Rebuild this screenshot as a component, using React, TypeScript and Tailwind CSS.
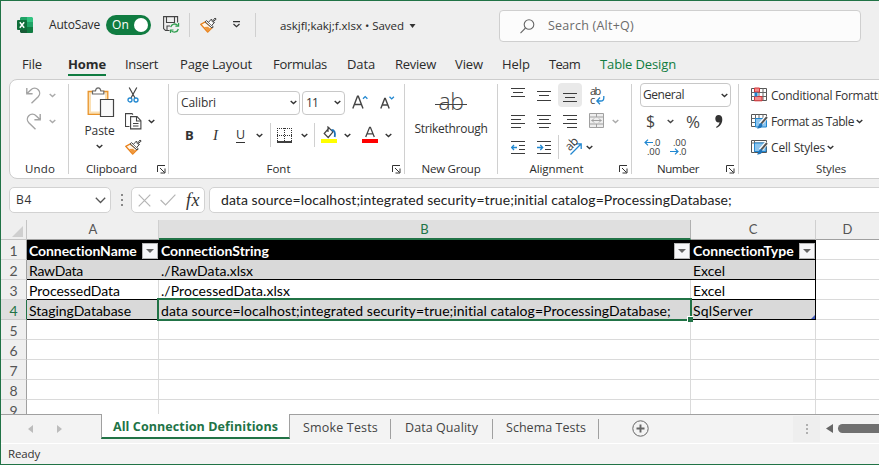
import React, { useLayoutEffect, useRef } from "react";

const UI = "font-['Open_Sans','Noto_Sans',sans-serif]";
const CELL = "font-['Lato',sans-serif]";

/* Text run whose tracking is adjusted so that it takes up `w` pixels. */
function T({ w, className = "", children }: { w: number; className?: string; children: string }) {
  const ref = useRef<HTMLSpanElement>(null);
  useLayoutEffect(() => {
    const el = ref.current;
    if (!el) return;
    el.style.letterSpacing = "0px";
    const natural = el.getBoundingClientRect().width;
    el.style.letterSpacing = `${(w - natural) / children.length}px`;
  }, [w, children]);
  return (
    <span ref={ref} className={`inline-block shrink-0 whitespace-pre leading-none ${className}`}>
      {children}
    </span>
  );
}

type P = { className?: string };

const Chevron = ({ className = "" }: P) => (
  <svg viewBox="0 0 7 5" className={`h-[5px] w-[7px] shrink-0 ${className}`} fill="none" stroke="currentColor" strokeWidth="1.4">
    <path d="M.7 1l2.8 2.600L6.300 1" />
  </svg>
);

const Launcher = ({ className = "" }: P) => (
  <svg viewBox="0 0 9 9" className={`h-[9px] w-[9px] shrink-0 ${className}`} fill="none" stroke="#333" strokeWidth="1">
    <path d="M.5 7V.5H8M3 3l4.5 4.5M8 3.5V8H3.5" />
  </svg>
);

const ExcelLogo = ({ className = "" }: P) => (
  <svg viewBox="0 0 16 16" className={`h-4 w-4 shrink-0 ${className}`}>
    <path d="M4 0h6v5H3V1z" fill="#21a366" />
    <path d="M10 0h5l1 1v4h-6z" fill="#33c481" />
    <path d="M3 5h7v5H3z" fill="#107c41" />
    <path d="M10 5h6v5h-6z" fill="#21a366" />
    <path d="M3 10h13v5l-1 1H4l-1-1z" fill="#185c37" />
    <path d="M10 10h6v5l-1 1h-5z" fill="#107c41" />
    <rect y="3" width="10" height="10" rx="1" fill="#0f6e3a" />
    <path d="M2.8 5.2l4.4 5.6M7.2 5.2l-4.4 5.6" stroke="#fff" strokeWidth="1.5" />
  </svg>
);

const SaveSync = ({ className = "" }: P) => (
  <svg viewBox="0 0 17 17" className={`h-[17px] w-[17px] shrink-0 ${className}`} fill="none">
    <path d="M6.5 14.5H2.5L.6 12.6V.6h14v6M3.5.6v5.9h8V.6M4 14.5V10h3" stroke="#444" strokeWidth="1.1" />
    <path d="M7.7 11.2a4 4 0 0 1 7-1.7M15.3 13a4 4 0 0 1-7 1.6" stroke="#2f9e4f" strokeWidth="1.3" />
    <path d="M15.6 7v3.2h-3.2M7.5 17v-3h3" stroke="#2f9e4f" strokeWidth="1.2" />
  </svg>
);

const Brush = ({ className = "" }: P) => (
  <svg viewBox="0 0 17 16" className={`h-4 w-[17px] shrink-0 ${className}`} fill="none" strokeLinejoin="round">
    <path d="M5 5L.8 7.400l6.900 7.600 4.500-4.500z" fill="#fff6ea" stroke="#e8811a" strokeWidth="1.4" />
    <path d="M4 10l4-.2 2.600 2.200-2.900 2.800z" fill="#f0983c" />
    <path d="M6.500 3.600l6.800 6.300-1.300 1.100-6.900-6.200z" fill="#fff" stroke="#444" />
    <path d="M8.500 5.300l3-3.300.8 2.500L15 1l1.200 1.100-3.400 2.800 1.700.5-2.700 2.900" fill="#fff" stroke="#444" />
  </svg>
);

const Undo = ({ className = "" }: P) => (
  <svg viewBox="0 0 15 17" className={`h-[17px] w-[15px] shrink-0 ${className}`} fill="none" stroke="#a3a3a3" strokeWidth="1.4">
    <path d="M.8 1v5.7h5.8M1 6.5l4-3.8a5 5 0 0 1 7.2 0 5 5 0 0 1 0 7L5.5 16.2" />
  </svg>
);

const Paste = ({ className = "" }: P) => (
  <svg viewBox="0 0 28 31" className={`h-[31px] w-7 shrink-0 ${className}`} fill="none">
    <path d="M1.2 4.5h19.600v22.800H1.200z" fill="#fbe0b4" stroke="#e8932a" strokeWidth="1.300" />
    <path d="M4 6.500h14v18H4z" fill="#fff" />
    <path d="M5.500 7V4h3c.3-4.300 5-4.300 5.300 0h3v3z" fill="#fff" stroke="#6a6a6a" strokeWidth="1.200" />
    <path d="M13.500 12.500h13v17h-13z" fill="#fafafa" stroke="#444" strokeWidth="1.200" />
  </svg>
);

const Cut = ({ className = "" }: P) => (
  <svg viewBox="0 0 12 16" className={`h-4 w-3 shrink-0 ${className}`} fill="none">
    <path d="M2.200.5l5.800 10.500M9.800.5L4 11" stroke="#444" strokeWidth="1.200" />
    <circle cx="3" cy="13" r="2" stroke="#2187d0" strokeWidth="1.300" />
    <circle cx="9" cy="13" r="2" stroke="#2187d0" strokeWidth="1.300" />
  </svg>
);

const Copy = ({ className = "" }: P) => (
  <svg viewBox="0 0 17 17" className={`h-[17px] w-[17px] shrink-0 ${className}`} fill="none" stroke="#444" strokeWidth="1.100">
    <path d="M4.500 13.500h-4V.6H7l1 1" />
    <path d="M5.600 3.600h6.400l3.900 4v8.300H5.600z" fill="#fff" />
    <path d="M11.500 3.600V8h4.400M8 10.500h5.500M8 13h5.500" />
  </svg>
);

const GrowA = ({ className = "" }: P) => (
  <svg viewBox="0 0 16 15" className={`h-[15px] w-4 shrink-0 ${className}`} fill="none">
    <path d="M.8 13.500L5.500 1.200h.8L11 13.500M2.500 9.500h6.800" stroke="#444" strokeWidth="1.400" />
    <path d="M11 3.800l2.200-2.200 2.200 2.200" stroke="#2187d0" strokeWidth="1.300" />
  </svg>
);
const ShrinkA = ({ className = "" }: P) => (
  <svg viewBox="0 0 15 15" className={`h-[15px] w-[15px] shrink-0 ${className}`} fill="none">
    <path d="M.8 13.500L4.700 3.500h.6L9.200 13.500M2.300 10h5.500" stroke="#444" strokeWidth="1.400" />
    <path d="M9.500 1.700l2.200 2.200 2.200-2.200" stroke="#2187d0" strokeWidth="1.300" />
  </svg>
);

const Borders = ({ className = "" }: P) => (
  <svg viewBox="0 0 16 16" className={`h-4 w-4 shrink-0 ${className}`} fill="none" stroke="#333">
    <path d="M0 1.500h16M0 8.500h16M.5 1v13M7.500 1v13M14.500 1v13" strokeDasharray="1 1" />
    <path d="M0 15h15" strokeWidth="1.500" stroke="#000" />
  </svg>
);

const Bucket = ({ className = "" }: P) => (
  <svg viewBox="0 0 16 18" className={`h-[18px] w-4 shrink-0 ${className}`} fill="none">
    <path d="M8.500 1.500L3.200 7.500l4 4L12 5.800 7 1v5" stroke="#444" strokeWidth="1.200" />
    <path d="M10.500 4c3 0 4 2.500 3.200 7" stroke="#1e73b8" strokeWidth="1.800" />
    <path d="M0 13h16v4H0z" fill="#ffff00" />
  </svg>
);
const FontColor = ({ className = "" }: P) => (
  <svg viewBox="0 0 16 18" className={`h-[18px] w-4 shrink-0 ${className}`} fill="none">
    <path d="M3.700 11L7.600 1.300h.8L12.300 11M5.200 7.800h5.600" stroke="#444" strokeWidth="1.300" />
    <path d="M0 13h16v4H0z" fill="#ff0000" />
  </svg>
);

/* Ruled lines, each given as [y, start, end], with an optional arrow. */
function Lines({ rows, arrow, className = "" }: { rows: [number, number, number][]; arrow?: string; className?: string }) {
  return (
    <svg viewBox="0 0 15 15" className={`h-[15px] w-[15px] shrink-0 ${className}`} fill="none">
      {rows.map(([y, a, b]) => (
        <path key={y} d={`M${a} ${y + 0.5}H${b}`} stroke="#3c3c3c" strokeWidth="1" />
      ))}
      {arrow && <path d={arrow} stroke="#2187d0" strokeWidth="1.300" />}
    </svg>
  );
}

const Wrap = ({ className = "" }: P) => (
  <span className={`flex h-[20px] w-[16px] shrink-0 flex-col text-[11px] text-[#3c3c3c] ${className}`}>
    <T w={13} className="h-[10px] !leading-[10px]">ab</T>
    <span className="flex h-[9px]">
      <T w={6} className="h-[9px] !leading-[8px]">c</T>
      <svg viewBox="0 0 9 9" className="h-[9px] w-[9px]" fill="none" stroke="#2187d0" strokeWidth="1.300">
        <path d="M7.800 0v2c0 2-1 3-3 3H1M4 1.500L.8 5 4 8.200" />
      </svg>
    </span>
  </span>
);

const Merge = ({ className = "" }: P) => (
  <svg viewBox="0 0 16 16" className={`h-4 w-4 shrink-0 ${className}`} fill="none" stroke="#a0a0a0">
    <path d="M.5.500h14v14H.5zM.5 4h14M.5 11h14M7.500.500V4M7.500 11v3.500" fill="#eee" />
    <path d="M2.500 7.500h10M5 5.500l-2 2 2 2M10 5.500l2 2-2 2" />
  </svg>
);

const Orientation = ({ className = "" }: P) => (
  <span className={`relative block h-[18px] w-[18px] shrink-0 ${className}`}>
    <span className="absolute left-0 top-0 -rotate-45 text-[12px] leading-none tracking-[-0.5px] text-[#3c3c3c]">ab</span>
    <svg viewBox="0 0 18 18" className="h-[18px] w-[18px]" fill="none" stroke="#2187d0" strokeWidth="1.300">
      <path d="M5.500 16.500L16 6M11 5.800h5.200V11" />
    </svg>
  </span>
);

const Arrow = ({ left = false }: { left?: boolean }) => (
  <svg viewBox="0 0 9 7" className={`h-[7px] w-[9px] shrink-0 ${left ? "-scale-x-100" : ""}`} fill="none" stroke="#2187d0" strokeWidth="1.200">
    <path d="M0 3.500h8M5 .6l3 2.900-3 2.900" />
  </svg>
);

const Decimals = ({ more, className = "" }: P & { more: boolean }) => (
  <span className={`flex w-[17px] shrink-0 flex-col text-[9.500px] text-[#3c3c3c] ${className}`}>
    <span className="flex h-[9px] items-center justify-end">
      {more && <Arrow left />}
      <T w={more ? 7 : 13} className="!leading-[9px]">{more ? ".0" : ".00"}</T>
    </span>
    <span className="flex h-[9px] items-center justify-end">
      {!more && <Arrow />}
      <T w={more ? 13 : 7} className="!leading-[9px]">{more ? ".00" : ".0"}</T>
    </span>
  </span>
);

const StyleGrid = ({ kind, className = "" }: P & { kind: "cond" | "table" | "cell" }) => (
  <svg viewBox="0 0 17 16" className={`h-4 w-[17px] shrink-0 ${className}`} fill="none">
    <path d="M.5 1.500h15v12H.5z" fill="#fff" stroke="#555" />
    {kind !== "cell" && <path d="M.5 5.500h15M.5 9.500h15M4.500 1v13M8 1v13M12 1v13" stroke="#666" />}
    {kind === "cond" && (
      <>
        <path d="M3.500 1h5v4h-5zM3.500 9.500h7.500v4.300H3.500z" fill="#f28b8b" stroke="#d13438" />
        <path d="M3.500 5.500h3v4h-3z" fill="#2187d0" />
      </>
    )}
    {kind === "table" && <path d="M4.500 5.500h11V14h-11z" fill="#8ec5ee" stroke="#2187d0" />}
    {kind === "cell" && (
      <>
        <path d="M.5 4h15M3.500 1v13" stroke="#666" />
        <path d="M3.500 4h11.500v8.500H3.500z" fill="#8ec5ee" stroke="#2187d0" />
      </>
    )}
    {kind !== "cond" && (
      <>
        <path d="M16 3.500L9.500 11" stroke="#fff" strokeWidth="4" />
        <path d="M16 4L10 10.800" stroke="#555" strokeWidth="2" />
        <path d="M10.500 10c-2 0-2.500 1.500-3 3L6 15.500c3 0 5.500-1 5.500-4z" fill="#1e73b8" />
      </>
    )}
  </svg>
);

const Sep = ({ className = "" }: P) => <span className={`w-px shrink-0 bg-[#d0d0d0] ${className}`} />;

function Group({ width, label, lw, launcher, children }: { width: string; label: string; lw: number; launcher?: string; children: React.ReactNode }) {
  return (
    <>
      <section className={`flex h-[98px] shrink-0 flex-col pt-[2px] ${width}`}>
        <div className="h-[78px] shrink-0">{children}</div>
        <div className="relative flex h-[18px] items-center justify-center">
          <T w={lw} className={`text-[11.5px] text-[#2b2b2b] ${label === "Undo" ? "translate-x-px" : launcher && label !== "Font" && label !== "Alignment" ? "-translate-x-[7px]" : launcher ? "-translate-x-[8px]" : ""}`}>{label}</T>
          {launcher && <Launcher className={`absolute top-[5px] ${launcher}`} />}
        </div>
      </section>
      <Sep className="mt-1 h-[90px]" />
    </>
  );
}

const tabs: [string, number, string][] = [
  ["File", 20, "ml-[21px]"],
  ["Home", 38, "ml-[26px]"],
  ["Insert", 33, "ml-[19px]"],
  ["Page Layout", 72, "ml-[22px]"],
  ["Formulas", 54, "ml-[21px]"],
  ["Data", 28, "ml-[20px]"],
  ["Review", 41, "ml-[20px]"],
  ["View", 28, "ml-[19px]"],
  ["Help", 28, "ml-[19px]"],
  ["Team", 31, "ml-[19px]"],
  ["Table Design", 76, "ml-[20px]"],
];

function TitleBar() {
  return (
    <header className="flex h-[47px] shrink-0 items-center text-[12px] text-[#2b2b2b]">
      <ExcelLogo className="ml-4" />
      <T w={51} className="ml-[16px]">AutoSave</T>
      <div className="ml-[6px] flex h-5 w-[45px] items-center rounded-full bg-[#107c41] text-white">
        <T w={17} className="ml-[6px]">On</T>
        <span className="ml-[5px] size-[14px] rounded-full bg-white" />
      </div>
      <SaveSync className="ml-3" />
      <Sep className="ml-[9px] h-6" />
      <Brush className="ml-[10px]" />
      <svg viewBox="0 0 9 7" className="ml-[15px] h-[7px] w-[9px]" fill="none" stroke="#333" strokeWidth="1.200">
        <path d="M1 .6h7M1.500 3l3 2.800L7.500 3" />
      </svg>
      <Sep className="ml-[14px] h-6" />
      <T w={124} className="ml-[24px] mt-[2px] text-[11.500px]">askjfl;kakj;f.xlsx • Saved</T>
      <svg viewBox="0 0 6 4" className="ml-[5px] mt-[2px] h-[4px] w-[7px]"><path d="M0 0h6L3 4z" fill="#333" /></svg>
      <div className="ml-[83px] mt-[3px] flex h-8 w-[362px] items-center rounded-[4px] border border-[#cfcfcf] bg-[#fcfcfc] text-[#6b6b6b]">
        <svg viewBox="0 0 15 15" className="ml-[20px] h-[15px] w-[15px]" fill="none" stroke="#666" strokeWidth="1.100">
          <circle cx="9" cy="5.500" r="4.800" /><path d="M5.500 9L.5 14.200" />
        </svg>
        <T w={86} className="ml-[13px] text-[12.500px]">Search (Alt+Q)</T>
      </div>
    </header>
  );
}

const alignRows: Record<string, [number, number, number][]> = {
  top: [[0, 0, 14], [4, 2, 12], [8, 0, 14]],
  mid: [[3, 0, 14], [7, 2, 12], [12, 0, 14]],
  bottom: [[3, 0, 14], [7, 2, 12], [11, 0, 14]],
  left: [[1, 0, 14], [5, 0, 10], [9, 0, 14], [13, 0, 10]],
  center: [[1, 0, 14], [5, 2, 12], [9, 0, 14], [13, 2, 12]],
  right: [[1, 0, 14], [5, 4, 14], [9, 0, 14], [13, 4, 14]],
  indent: [[1, 0, 14], [5, 8, 14], [9, 8, 14], [13, 0, 14]],
};

function Ribbon() {
  return (
    <div className="ml-[8px] flex h-[100px] w-[900px] shrink-0 rounded-l-[8px] border border-[#cdcdcd] bg-white text-[#333]">
      <Group width="w-[58px]" label="Undo" lw={30}>
        <div className="flex h-[26px] items-center pl-4"><Undo /><Chevron className="ml-[8px] text-[#aaa]" /></div>
        <div className="flex h-[26px] items-center pl-4"><Undo className="-scale-x-100" /><Chevron className="ml-[8px] text-[#aaa]" /></div>
      </Group>

      <Group width="w-[99px]" label="Clipboard" lw={51} launcher="right-[2px]">
        <div className="flex">
          <div className="ml-[13px] flex w-[34px] flex-col items-center">
            <Paste className="ml-1 mt-[5px]" />
            <T w={30} className="-mr-px mt-[7px] text-[12px]">Paste</T>
            <Chevron className="mt-[7px]" />
          </div>
          <div className="ml-[9px]">
            <div className="flex h-[26px] items-center"><Cut className="ml-[2px]" /></div>
            <div className="flex h-[26px] items-center"><Copy /><Chevron className="ml-[6px]" /></div>
            <div className="flex h-[26px] items-center"><Brush /></div>
          </div>
        </div>
      </Group>

      <Group width="w-[235px]" label="Font" lw={24} launcher="right-[3px]">
        <div className="flex h-[41px] items-center pl-[8px]">
          <div className="flex h-6 w-[123px] items-center rounded-[4px] border border-[#c8c8c8]">
            <T w={35} className="ml-[3px] text-[12px]">Calibri</T><Chevron className="ml-auto mr-[2px]" />
          </div>
          <div className="ml-[2px] flex h-6 w-[43px] items-center rounded-[4px] border border-[#c8c8c8]">
            <T w={12} className="ml-[3px] text-[12px]">11</T><Chevron className="ml-auto mr-[3px]" />
          </div>
          <GrowA className="ml-[7px]" />
          <ShrinkA className="ml-[12px]" />
        </div>
        <div className="flex h-[24px] items-center pl-[16px]">
          <T w={9} className="text-[13px] font-bold">B</T>
          <span className="ml-[19px] w-[8px] font-['Liberation_Serif',serif] text-[15px] italic leading-none">I</span>
          <T w={9} className="ml-[15px] text-[12.500px] underline underline-offset-[3px]">U</T>
          <Chevron className="ml-[11px]" />
          <Sep className="ml-[7px] h-6" />
          <Borders className="ml-[6px]" />
          <Chevron className="ml-[8px]" />
          <Sep className="ml-[6px] h-6" />
          <Bucket className="ml-[6px]" />
          <Chevron className="ml-[7px]" />
          <FontColor className="ml-[11px]" />
          <Chevron className="ml-[7px]" />
        </div>
      </Group>

      <Group width="w-[92px]" label="New Group" lw={59}>
        <div className="flex flex-col items-center">
          <div className="relative mt-[7px] flex h-[24px] w-[32px] items-center justify-center">
            <T w={25} className="text-[23px] font-light text-[#444]">ab</T>
            <span className="absolute left-0 top-[15px] h-px w-[32px] bg-[#444]" />
          </div>
          <T w={73} className="mt-[10px] text-[12px]">Strikethrough</T>
        </div>
      </Group>

      <Group width="w-[133px]" label="Alignment" lw={54} launcher="right-[3px]">
        <div className="flex h-[26px] items-center pl-[13px]">
          <Lines rows={alignRows.top} />
          <Lines rows={alignRows.mid} className="ml-[11px]" />
          <span className="ml-[6px] flex h-6 w-6 items-center justify-center rounded-[4px] bg-[#e9e9e9]"><Lines rows={alignRows.bottom} className="mt-[4px]" /></span>
          <Wrap className="ml-[8px] mt-px" />
        </div>
        <div className="flex h-[26px] items-center pl-[13px]">
          <Lines rows={alignRows.left} />
          <Lines rows={alignRows.center} className="ml-[11px]" />
          <Lines rows={alignRows.right} className="ml-[11px]" />
          <Merge className="ml-[11px]" />
          <Chevron className="ml-[7px] text-[#aaa]" />
        </div>
        <div className="flex h-[26px] items-center pl-[13px]">
          <Lines rows={alignRows.indent} arrow="M6 7.500H.8M3 5L.6 7.500 3 10" />
          <Lines rows={alignRows.indent} arrow="M0 7.500h5.500M3.300 5l2.400 2.500L3.300 10" className="ml-[11px]" />
          <Sep className="ml-[6px] h-6" />
          <Orientation className="ml-[6px]" />
          <Chevron className="ml-[3px]" />
        </div>
      </Group>

      <Group width="w-[106px]" label="Number" lw={42} launcher="right-[3px]">
        <div className="flex h-[26px] items-center pl-[8px]">
          <div className="flex h-6 w-[91px] items-center rounded-[4px] border border-[#c8c8c8]">
            <T w={41} className="ml-[2px] text-[12px]">General</T><Chevron className="ml-auto mr-[2px]" />
          </div>
        </div>
        <div className="flex h-[26px] items-center pl-[14px] text-[#444]">
          <T w={10} className="text-[16px]">$</T>
          <Chevron className="ml-[11px]" />
          <T w={17} className="ml-[12px] text-[17px]">%</T>
          <svg viewBox="0 0 8 13" className="ml-[12px] h-[13px] w-2"><path d="M3.500 0C6 0 7.500 1.800 7.300 5c-.3 4-2.800 7-6 7.800L1 12c2-1 3.300-2.800 3.500-4.700C2.300 8 .3 6.300.3 3.700.3 1.500 1.500 0 3.500 0z" fill="#333" /></svg>
        </div>
        <div className="flex h-[26px] items-center pl-[11px]">
          <Decimals more />
          <Decimals more={false} className="ml-[9px]" />
        </div>
      </Group>

      <div className="flex w-[180px] shrink-0 flex-col pt-[2px] text-[12px]">
        <div className="flex h-[26px] items-center pl-3"><StyleGrid kind="cond" /><T w={123} className="ml-[3px] pt-[2px]">Conditional Formatting</T></div>
        <div className="flex h-[26px] items-center pl-3"><StyleGrid kind="table" /><T w={83} className="ml-[3px] pt-[2px]">Format as Table</T><Chevron className="ml-[2px]" /></div>
        <div className="flex h-[26px] items-center pl-3"><StyleGrid kind="cell" /><T w={54} className="ml-[3px] pt-[2px]">Cell Styles</T><Chevron className="ml-[2px]" /></div>
        <div className="flex h-[18px] items-center pl-[77px]"><T w={30} className="text-[11.500px]">Styles</T></div>
      </div>
    </div>
  );
}

const FORMULA = "data source=localhost;integrated security=true;initial catalog=ProcessingDatabase;";

function FormulaBar() {
  return (
    <div className="mt-[8px] flex h-[26px] shrink-0 text-[#333]">
      <div className="ml-[8px] flex h-[26px] w-[102px] shrink-0 items-center rounded-[5px] border border-[#d2d2d2] bg-white">
        <T w={16} className="ml-[6px] text-[12px]">B4</T>
        <svg viewBox="0 0 11 7" className="ml-auto mr-[4px] h-[7px] w-[11px]" fill="none" stroke="#555" strokeWidth="1.300"><path d="M.8.800l4.700 4.700L10.200.8" /></svg>
      </div>
      <div className="ml-[9px] flex w-[3px] shrink-0 flex-col items-center justify-center gap-[3px]">
        <i className="size-[2px] bg-[#888]" /><i className="size-[2px] bg-[#888]" /><i className="size-[2px] bg-[#888]" />
      </div>
      <div className="ml-[8px] flex h-[26px] w-[74px] shrink-0 items-center rounded-[5px] border border-[#d2d2d2] bg-white">
        <svg viewBox="0 0 13 13" className="ml-[6px] h-[13px] w-[13px] shrink-0" fill="none" stroke="#b5b5b5" strokeWidth="1.200"><path d="M.7.700l11.600 11.600M12.300.7L.7 12.300" /></svg>
        <svg viewBox="0 0 16 12" className="ml-[9px] h-3 w-4 shrink-0" fill="none" stroke="#b5b5b5" strokeWidth="1.200"><path d="M.6 6l5 5L15.400.7" /></svg>
        <T w={14} className="ml-[10px] font-['Liberation_Serif',serif] text-[18px] italic">fx</T>
      </div>
      <div className="ml-[4px] flex h-[26px] w-[700px] shrink-0 items-center rounded-[5px] border border-[#d2d2d2] bg-white">
        <T w={511} className={`ml-[11px] text-[14px] text-[#222] ${CELL}`}>{FORMULA}</T>
      </div>
    </div>
  );
}

const FilterButton = () => (
  <span className="ml-auto mr-px mt-[2px] flex h-[16px] w-[16px] shrink-0 items-center justify-center border border-[#b5b5b5] bg-[#f6f6f8]">
    <svg viewBox="0 0 8 4" className="h-[4px] w-[8px]"><path d="M0 0h8L4 4z" fill="#666" /></svg>
  </span>
);

type Cell = [string, number];
const rows: { n: number; cells?: [Cell, Cell, Cell] }[] = [
  { n: 1, cells: [["ConnectionName", 108], ["ConnectionString", 108], ["ConnectionType", 101]] },
  { n: 2, cells: [["RawData", 54], ["./RawData.xlsx", 92], ["Excel", 32]] },
  { n: 3, cells: [["ProcessedData", 91], ["./ProcessedData.xlsx", 129], ["Excel", 32]] },
  { n: 4, cells: [["StagingDatabase", 102], [FORMULA, 510], ["SqlServer", 60]] },
  { n: 5 }, { n: 6 }, { n: 7 }, { n: 8 }, { n: 9 },
];
const colWidths = ["w-[132px]", "w-[532px]", "w-[125px]"];

function Sheet() {
  return (
    <main className={`mt-[7px] flex h-[194px] shrink-0 flex-col overflow-hidden bg-white ${CELL}`}>
      <div className="flex h-[20px] shrink-0 bg-[#efefef] text-[13px] text-[#555]">
        <div className="flex w-[26px] shrink-0 border-b border-r border-[#c4c4c4]">
          <svg viewBox="0 0 11 11" className="ml-[11px] mt-[6px] h-[11px] w-[11px]"><path d="M11 0v11H0z" fill="#cfcfcf" /></svg>
        </div>
        <div className="flex w-[132px] shrink-0 items-center justify-center border-b border-r border-b-[#a0a0a0] border-r-[#cfcfcf] pl-px pt-px">A</div>
        <div className="flex w-[532px] shrink-0 items-center justify-center border-b-2 border-r border-b-[#217346] border-r-[#b0b0b0] bg-[#dfdfdf] pt-[2px] text-[#217346]">B</div>
        <div className="flex w-[125px] shrink-0 items-center justify-center border-b border-r border-b-[#a0a0a0] border-r-[#cfcfcf] pt-px">C</div>
        <div className="flex w-[63px] shrink-0 items-center justify-center border-b border-[#a0a0a0] pt-px">D</div>
      </div>
      {rows.map(({ n, cells }) => (
        <div key={n} className={`relative flex h-[20px] shrink-0 text-[14px] ${n === 4 ? "z-10" : ""}`}>
          <div className={`flex w-[26px] shrink-0 items-center justify-center border-b border-r ${n === 4 ? "border-b-[#c8c8c8] border-r-[#217346] bg-[#dfdfdf] text-[#217346]" : "border-b-[#d8d8d8] border-r-[#a0a0a0] bg-[#efefef] text-[#555]"}`}>
            <span className="pt-px">{n}</span>
          </div>
          {colWidths.map((cw, i) => (
            <div
              key={i}
              className={`flex shrink-0 items-center border-b pl-[2px] ${cw} ${
                n === 1
                  ? "border-black bg-black font-bold text-white"
                  : cells
                    ? `border-b-black text-black ${i === 2 ? "border-r border-r-black" : n === 3 ? "border-r border-r-[#d9d9d9]" : ""} ${n === 3 ? "bg-white" : "bg-[#d9d9d9]"}`
                    : "border-r border-[#dadada]"
              }`}
            >
              {cells && <T w={cells[i][1]} className="pt-[2px]">{cells[i][0]}</T>}
              {n === 1 && <FilterButton />}
            </div>
          ))}
          <div className="grow border-b border-[#dadada]" />
          {n === 4 && (
            <>
              <span className="absolute -top-[2px] left-[156px] h-[23px] w-[535px] border-2 border-[#217346]" />
              <span className="absolute left-[686px] top-[16px] size-[6px] border-l border-t border-white bg-[#217346]" />
              <svg viewBox="0 0 4 4" className="absolute left-[810px] top-[15px] h-[4px] w-[4px]"><path d="M4 0v4H0z" fill="#3c56b8" /></svg>
            </>
          )}
        </div>
      ))}
    </main>
  );
}

function SheetTabs() {
  return (
    <nav className="flex h-[29px] shrink-0 items-start bg-[#f3f3f3] text-[12.500px] text-[#444]">
      <div className="flex h-[28px] w-[100px] shrink-0 items-center border-t border-[#a0a0a0] pl-[27px]">
        <svg viewBox="0 0 5 8" className="h-2 w-[5px]"><path d="M5 0v8L0 4z" fill="#bcbcbc" /></svg>
        <svg viewBox="0 0 5 8" className="ml-[24px] h-2 w-[5px]"><path d="M0 0v8l5-4z" fill="#bcbcbc" /></svg>
      </div>
      <div className="flex h-[25px] w-[189px] shrink-0 items-center justify-center border-x border-b-2 border-x-[#a0a0a0] border-b-[#217346] bg-white">
        <T w={165} className="mt-[3px] font-bold text-[#217346]">All Connection Definitions</T>
      </div>
      <div className="flex h-[28px] grow items-center border-t border-[#a0a0a0]">
        <T w={75} className="ml-[13px]">Smoke Tests</T>
        <span className="ml-[12px] h-5 w-px bg-[#a0a0a0]" />
        <T w={73} className="ml-[14px]">Data Quality</T>
        <span className="ml-[14px] h-5 w-px bg-[#a0a0a0]" />
        <T w={80} className="ml-[13px]">Schema Tests</T>
        <span className="ml-[12px] h-5 w-px bg-[#a0a0a0]" />
        <svg viewBox="0 0 17 17" className="ml-[33px] h-[17px] w-[17px]" fill="none" stroke="#666"><circle cx="8.500" cy="8.500" r="7.700" /><path d="M8.500 4.500v8M4.500 8.500h8" strokeWidth="1.900" /></svg>
        <div className="ml-auto flex h-[26px] w-[27px] flex-col items-center justify-center gap-[2px] bg-[#eeeeee]">
          <i className="size-[2px] bg-[#b0b0b0]" /><i className="size-[2px] bg-[#b0b0b0]" /><i className="size-[2px] bg-[#b0b0b0]" />
        </div>
        <svg viewBox="0 0 7 9" className="ml-[6px] h-[9px] w-[7px]"><path d="M7 0v9L0 4.500z" fill="#666" /></svg>
        <span className="ml-[5px] h-[9px] w-[41px] rounded-l-full bg-[#707070]" />
      </div>
    </nav>
  );
}

export default function App() {
  return (
    <div className={`flex h-[465px] w-[879px] flex-col overflow-hidden border-b border-l border-t border-[#217346] bg-[#efefef] ${UI}`}>
      <TitleBar />
      <div className="flex h-[31px] shrink-0 text-[13px] text-[#2b2b2b]">
        {tabs.map(([name, w, ml]) => (
          <div key={name} className={`flex h-[28px] shrink-0 flex-col border-b-2 pt-[10px] ${ml} ${name === "Home" ? "border-[#107c41] font-bold" : "border-transparent"} ${name === "Table Design" ? "text-[#107c41]" : ""}`}>
            <T w={w}>{name}</T>
          </div>
        ))}
      </div>
      <Ribbon />
      <FormulaBar />
      <Sheet />
      <SheetTabs />
      <footer className="flex h-[22px] grow items-center border-t border-white bg-[#f3f3f3] pl-[7px] text-[11.500px] text-[#333]">
        <T w={32}>Ready</T>
      </footer>
    </div>
  );
}
